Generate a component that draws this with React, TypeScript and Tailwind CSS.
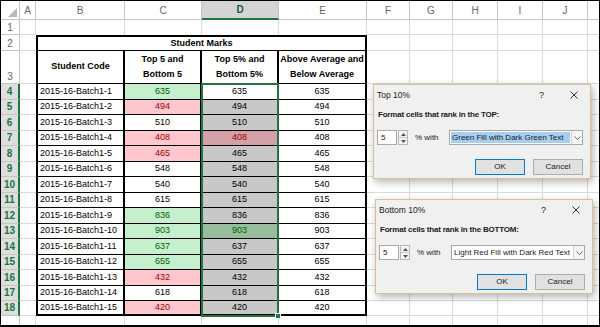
type Fill = "g" | "r" | "";
type Sel = "w" | "s" | "sr" | "sg";

const rows: { code: string; v: number; c: Fill; d: Sel }[] = [
  { code: "2015-16-Batch1-1", v: 635, c: "g", d: "w" },
  { code: "2015-16-Batch1-2", v: 494, c: "r", d: "s" },
  { code: "2015-16-Batch1-3", v: 510, c: "", d: "s" },
  { code: "2015-16-Batch1-4", v: 408, c: "r", d: "sr" },
  { code: "2015-16-Batch1-5", v: 465, c: "r", d: "s" },
  { code: "2015-16-Batch1-6", v: 548, c: "", d: "s" },
  { code: "2015-16-Batch1-7", v: 540, c: "", d: "s" },
  { code: "2015-16-Batch1-8", v: 615, c: "", d: "s" },
  { code: "2015-16-Batch1-9", v: 836, c: "g", d: "s" },
  { code: "2015-16-Batch1-10", v: 903, c: "g", d: "sg" },
  { code: "2015-16-Batch1-11", v: 637, c: "g", d: "s" },
  { code: "2015-16-Batch1-12", v: 655, c: "g", d: "s" },
  { code: "2015-16-Batch1-13", v: 432, c: "r", d: "s" },
  { code: "2015-16-Batch1-14", v: 618, c: "", d: "s" },
  { code: "2015-16-Batch1-15", v: 420, c: "r", d: "s" },
];

const cFill: Record<Fill, string> = {
  g: "bg-[#c6efce] text-[#006100]",
  r: "bg-[#ffc7ce] text-[#9c0006]",
  "": "bg-white text-black",
};

const dFill: Record<Sel, string> = {
  w: "bg-white text-black",
  s: "bg-[#c8c8c8] text-black",
  sr: "bg-[#d3a0a5] text-[#9c0006]",
  sg: "bg-[#98bd9d] text-[#006100]",
};

const GRID = "border-r border-b border-[#dadada]";
const COLHEAD =
  "flex items-center justify-center border-r border-b border-[#c5c5c5] text-[10px] text-[#666]";
const ROWHEAD =
  "flex items-end justify-center pb-[1px] border-r border-b border-[#c5c5c5] text-[10px] leading-none text-[#666]";
const ROWHEAD_SEL =
  "flex items-center justify-center bg-[#dedede] border-r-2 border-r-[#217346] border-b border-b-[#c5c5c5] text-[10px] font-bold leading-none text-[#217346]";

function Tail({ last }: { last?: boolean }) {
  const cls = last ? "border-r border-[#dadada]" : GRID;
  return (
    <>
      <div className={cls} />
      <div className={cls} />
      <div className={cls} />
      <div className={cls} />
      <div className={cls} />
      <div className={last ? "" : "border-b border-[#dadada]"} />
    </>
  );
}

function Dialog({
  title,
  label,
  choice,
  picked,
  className,
}: {
  title: string;
  label: string;
  choice: string;
  picked?: boolean;
  className: string;
}) {
  return (
    <div
      className={`absolute z-20 w-[218px] border border-[#d9bf98] bg-[#f0f0f0] text-[8px] leading-none text-[#1a1a1a] shadow-[2px_3px_8px_rgba(0,0,0,0.3)] ${className}`}
    >
      <div className="flex h-[20px] items-center pl-[3px] pr-[12px]">
        <span className="flex-1 text-[8.5px]">{title}</span>
        <span className="mr-[26px] text-[9px]">?</span>
        <svg width="8" height="8" viewBox="0 0 8 8">
          <path d="M0.5 0.5 L7.5 7.5 M7.5 0.5 L0.5 7.5" stroke="#333" strokeWidth="1" />
        </svg>
      </div>
      <div className="flex h-[20px] items-center pl-[4px] font-bold tracking-[-0.2px]">{label}</div>
      <div className="mt-[5px] flex h-[15px] items-center pl-[3px] pr-[7px]">
        <div className="flex h-full w-[20px] items-center border border-[#a8a8a8] bg-white pl-[3px]">5</div>
        <div className="ml-[1px] flex h-full w-[10px] flex-col border border-[#b8b8b8] bg-[#f4f4f4]">
          <div className="flex flex-1 items-center justify-center border-b border-[#c8c8c8]">
            <svg width="5" height="3" viewBox="0 0 5 3">
              <path d="M0 3 L2.5 0 L5 3 Z" fill="#555" />
            </svg>
          </div>
          <div className="flex flex-1 items-center justify-center">
            <svg width="5" height="3" viewBox="0 0 5 3">
              <path d="M0 0 L2.5 3 L5 0 Z" fill="#555" />
            </svg>
          </div>
        </div>
        <span className="ml-[7px]">% with</span>
        <div className="ml-auto flex h-full w-[134px] border border-[#a8a8a8] bg-white">
          <div className="flex flex-1 items-center p-[1px]">
            <span
              className={`flex h-full w-full items-center whitespace-nowrap pl-[1px] ${picked ? "bg-[#a6cdf2]" : ""}`}
            >
              {choice}
            </span>
          </div>
          <div className="flex w-[11px] items-center justify-center border-l border-[#d0d0d0] bg-[#f4f4f4]">
            <svg width="7" height="4" viewBox="0 0 7 4">
              <path d="M0.5 0.5 L3.5 3.5 L6.5 0.5" fill="none" stroke="#666" strokeWidth="1" />
            </svg>
          </div>
        </div>
      </div>
      <div className="mb-[3px] mt-[14px] flex justify-end gap-[8px] pr-[7px]">
        <div className="flex h-[16px] w-[50px] items-center justify-center border border-[#0078d7] bg-[#e1e1e1]">
          OK
        </div>
        <div className="flex h-[16px] w-[50px] items-center justify-center border border-[#adadad] bg-[#e1e1e1]">
          Cancel
        </div>
      </div>
    </div>
  );
}

export default function App() {
  const letters = ["A", "B", "C", "D", "E", "F", "G", "H", "I", "J", ""];
  return (
    <div className="relative h-[327px] w-[600px] overflow-hidden border border-b-2 border-black bg-white font-['Liberation_Sans',Arial,sans-serif]">
      <div className="grid h-full grid-cols-[19px_16px_89px_77px_77px_88px_43px_43px_45px_45px_45px_1fr] grid-rows-[19px_15px_16px_33px_16px_15px_16px_15px_16px_15px_16px_15px_16px_15px_16px_15px_16px_15px_15px_1fr]">
        {/* column headers */}
        <div className="flex items-end justify-end border-r border-b border-[#c5c5c5] p-[2px]">
          <svg width="9" height="9" viewBox="0 0 9 9">
            <path d="M9 0 L9 9 L0 9 Z" fill="#b8b8b8" />
          </svg>
        </div>
        {letters.map((l, i) =>
          l === "D" ? (
            <div
              key={i}
              className="flex items-center justify-center border-r border-r-[#c5c5c5] border-b-2 border-b-[#217346] bg-[#d4d4d4] text-[10px] font-bold text-[#1d5b38]"
            >
              {l}
            </div>
          ) : (
            <div key={i} className={i === 10 ? "border-b border-[#c5c5c5]" : COLHEAD}>
              {l}
            </div>
          )
        )}

        {/* row 1 */}
        <div className={ROWHEAD}>1</div>
        <div className={GRID} />
        <div className="border-r border-[#dadada]" />
        <div className="border-r border-[#dadada]" />
        <div className="border-r border-[#dadada]" />
        <div className="border-r border-[#dadada]" />
        <Tail />

        {/* row 2 */}
        <div className={`${ROWHEAD} items-center pb-0`}>2</div>
        <div className="border-b border-[#dadada]" />
        <div className="col-span-4 flex items-center justify-center border-x-2 border-t-2 border-b border-black text-[9px] font-bold">
          Student Marks
        </div>
        <Tail />

        {/* row 3 */}
        <div className={`${ROWHEAD} pb-[1px]`}>3</div>
        <div className="border-b border-[#dadada]" />
        <div className="flex items-center justify-center border-x-2 border-b border-black text-[9px] font-bold">
          Student Code
        </div>
        <div className="flex flex-col items-center justify-center border-r-2 border-b border-black text-[9px] font-bold leading-[15px]">
          <span>Top 5 and</span>
          <span>Bottom 5</span>
        </div>
        <div className="flex flex-col items-center justify-center border-r-2 border-b border-black text-[9px] font-bold leading-[15px]">
          <span>Top 5% and</span>
          <span>Bottom 5%</span>
        </div>
        <div className="flex flex-col items-center justify-center border-r-2 border-b border-black text-[9px] font-bold leading-[15px]">
          <span>Above Average and</span>
          <span>Below Average</span>
        </div>
        <Tail />

        {/* data rows */}
        {rows.map((r, i) => {
          const bb = i === rows.length - 1 ? "border-b-2" : "border-b";
          return (
            <div key={r.code} className="contents">
              <div className={ROWHEAD_SEL}>{i + 4}</div>
              <div className="border-b border-[#dadada]" />
              <div className={`flex items-center whitespace-nowrap border-x-2 ${bb} border-black pl-[2px] text-[9px]`}>
                {r.code}
              </div>
              <div className={`flex items-center justify-center border-r-2 ${bb} border-black text-[9px] ${cFill[r.c]}`}>
                {r.v}
              </div>
              <div
                className={`flex items-center justify-center border-r-2 ${bb} border-black text-[9px] ${dFill[r.d]} ${i === 0 ? "relative" : ""}`}
              >
                {r.v}
                {i === 0 && (
                  <div className="pointer-events-none absolute -left-[1px] -top-[1px] z-10 h-[234px] w-[78px] border-2 border-[#217346]">
                    <div className="absolute -bottom-[4px] -right-[4px] h-[6px] w-[6px] border border-white bg-[#217346]" />
                  </div>
                )}
              </div>
              <div className={`flex items-center justify-center border-r-2 ${bb} border-black text-[9px]`}>
                {r.v}
              </div>
              <Tail />
            </div>
          );
        })}

        {/* row 19 (partly visible) */}
        <div className="border-r border-[#c5c5c5]" />
        <div className="border-r border-[#dadada]" />
        <div className="border-r border-[#dadada]" />
        <div className="border-r border-[#dadada]" />
        <div className="border-r border-[#dadada]" />
        <div className="border-r border-[#dadada]" />
        <Tail last />
      </div>

      <Dialog
        title="Top 10%"
        label="Format cells that rank in the TOP:"
        choice="Green Fill with Dark Green Text"
        picked
        className="left-[372px] top-[83px]"
      />
      <Dialog
        title="Bottom 10%"
        label="Format cells that rank in the BOTTOM:"
        choice="Light Red Fill with Dark Red Text"
        className="left-[374px] top-[198px]"
      />
    </div>
  );
}
